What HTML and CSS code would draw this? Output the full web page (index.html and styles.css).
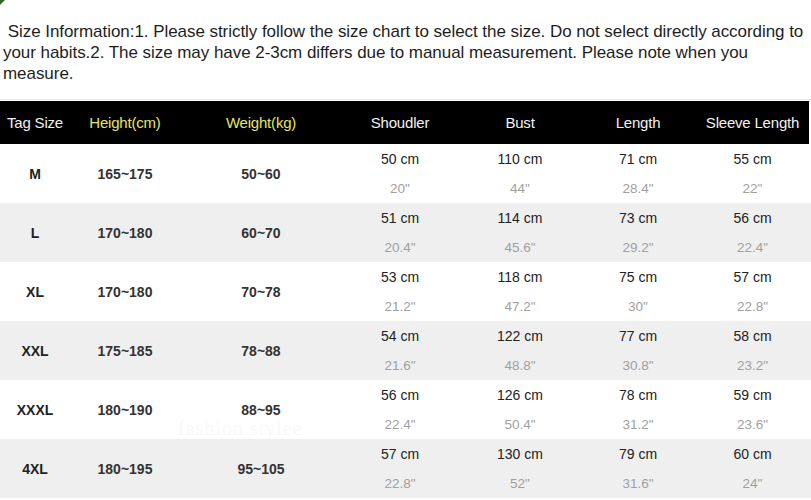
FILE: index.html
```html
<!DOCTYPE html>
<html>
<head>
<meta charset="utf-8">
<link rel="stylesheet" href="styles.css">
</head>
<body>
<span class="corner"></span>
<p class="info">&nbsp;Size Information:1. Please strictly follow the size chart to select the size. Do not select directly according to your habits.2. The size may have 2-3cm differs due to manual measurement. Please note when you measure.</p>
<div class="rule"></div>
<div class="chart">
  <div class="row head">
    <div class="c">Tag Size</div>
    <div class="c y">Height(cm)</div>
    <div class="c y">Weight(kg)</div>
    <div class="c">Shoudler</div>
    <div class="c">Bust</div>
    <div class="c">Length</div>
    <div class="c">Sleeve Length</div>
  </div>
  <div class="row">
    <div class="c b">M</div><div class="c s">165~175</div><div class="c s">50~60</div>
    <div class="c m"><span>50 cm</span><span class="in">20"</span></div>
    <div class="c m"><span>110 cm</span><span class="in">44"</span></div>
    <div class="c m"><span>71 cm</span><span class="in">28.4"</span></div>
    <div class="c m"><span>55 cm</span><span class="in">22"</span></div>
  </div>
  <div class="row alt">
    <div class="c b">L</div><div class="c s">170~180</div><div class="c s">60~70</div>
    <div class="c m"><span>51 cm</span><span class="in">20.4"</span></div>
    <div class="c m"><span>114 cm</span><span class="in">45.6"</span></div>
    <div class="c m"><span>73 cm</span><span class="in">29.2"</span></div>
    <div class="c m"><span>56 cm</span><span class="in">22.4"</span></div>
  </div>
  <div class="row">
    <div class="c b">XL</div><div class="c s">170~180</div><div class="c s">70~78</div>
    <div class="c m"><span>53 cm</span><span class="in">21.2"</span></div>
    <div class="c m"><span>118 cm</span><span class="in">47.2"</span></div>
    <div class="c m"><span>75 cm</span><span class="in">30"</span></div>
    <div class="c m"><span>57 cm</span><span class="in">22.8"</span></div>
  </div>
  <div class="row alt">
    <div class="c b">XXL</div><div class="c s">175~185</div><div class="c s">78~88</div>
    <div class="c m"><span>54 cm</span><span class="in">21.6"</span></div>
    <div class="c m"><span>122 cm</span><span class="in">48.8"</span></div>
    <div class="c m"><span>77 cm</span><span class="in">30.8"</span></div>
    <div class="c m"><span>58 cm</span><span class="in">23.2"</span></div>
  </div>
  <div class="row wm">
    <div class="c b">XXXL</div><div class="c s">180~190</div><div class="c s">88~95</div>
    <div class="c m"><span>56 cm</span><span class="in">22.4"</span></div>
    <div class="c m"><span>126 cm</span><span class="in">50.4"</span></div>
    <div class="c m"><span>78 cm</span><span class="in">31.2"</span></div>
    <div class="c m"><span>59 cm</span><span class="in">23.6"</span></div>
    <span class="mark">fashion stylee</span>
  </div>
  <div class="row alt">
    <div class="c b">4XL</div><div class="c s">180~195</div><div class="c s">95~105</div>
    <div class="c m"><span>57 cm</span><span class="in">22.8"</span></div>
    <div class="c m"><span>130 cm</span><span class="in">52"</span></div>
    <div class="c m"><span>79 cm</span><span class="in">31.6"</span></div>
    <div class="c m"><span>60 cm</span><span class="in">24"</span></div>
  </div>
</div>
</body>
</html>
```
FILE: styles.css
```css
html, body {
  margin: 0;
  padding: 0;
  background: #fff;
}
body {
  font-family: "Liberation Sans", Arial, sans-serif;
  color: #1a1a1a;
  position: relative;
}
.corner {
  position: absolute;
  left: 0;
  top: 0;
  width: 0;
  height: 0;
  border-top: 5px solid #2f6b2a;
  border-right: 5px solid transparent;
}
.info {
  margin: 0;
  padding: 21px 4px 0 3px;
  font-size: 17px;
  line-height: 21px;
  letter-spacing: -0.05px;
  color: #1e1e1e;
}
.rule {
  height: 1px;
  background: #e4e4e4;
  margin-top: 15px;
}
.chart {
  margin-top: 1px;
  width: 811px;
}
.row {
  display: grid;
  grid-template-columns: 70px 110px 162px 116px 124px 112px 117px;
  height: 59px;
  background: #fff;
  position: relative;
}
.row.alt {
  background: #efefef;
}
.row.head {
  height: 43px;
  background: #000;
  margin-right: 2px;
}
.head .c {
  color: #f2f2f2;
  font-size: 15px;
  letter-spacing: -0.2px;
}
.head .c.y {
  color: #e6e46a;
}
.c {
  display: flex;
  align-items: center;
  justify-content: center;
  font-size: 14px;
}
.c.b {
  font-weight: bold;
  color: #222;
  padding-top: 1px;
}
.c.s {
  font-weight: bold;
  color: #333;
  padding-top: 1px;
}
.c.m {
  flex-direction: column;
  justify-content: flex-start;
  padding-top: 6px;
  gap: 10px;
  color: #222;
  line-height: 19px;
}
.c.m .in {
  color: #a0a0a0;
  font-size: 13.5px;
}
.mark {
  position: absolute;
  left: 178px;
  top: 37px;
  font-family: "Liberation Serif", serif;
  font-size: 20px;
  letter-spacing: 1px;
  color: #f9f9f9;
}
```
